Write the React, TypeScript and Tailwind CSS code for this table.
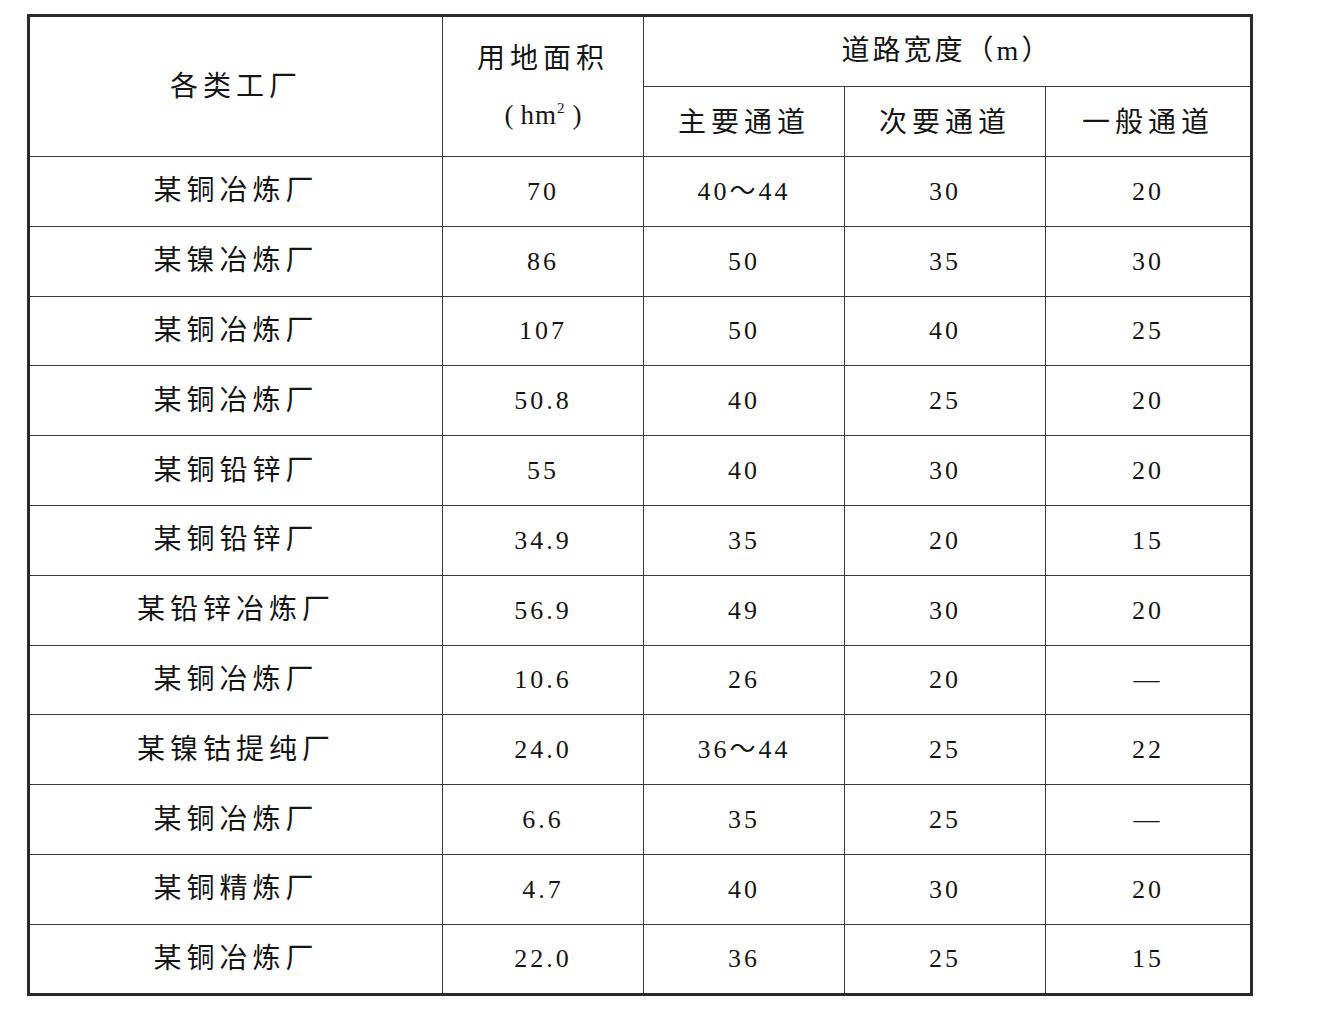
const rows: string[][] = [
  ["某铜冶炼厂", "70", "40～44", "30", "20"],
  ["某镍冶炼厂", "86", "50", "35", "30"],
  ["某铜冶炼厂", "107", "50", "40", "25"],
  ["某铜冶炼厂", "50.8", "40", "25", "20"],
  ["某铜铅锌厂", "55", "40", "30", "20"],
  ["某铜铅锌厂", "34.9", "35", "20", "15"],
  ["某铅锌冶炼厂", "56.9", "49", "30", "20"],
  ["某铜冶炼厂", "10.6", "26", "20", "—"],
  ["某镍钴提纯厂", "24.0", "36～44", "25", "22"],
  ["某铜冶炼厂", "6.6", "35", "25", "—"],
  ["某铜精炼厂", "4.7", "40", "30", "20"],
  ["某铜冶炼厂", "22.0", "36", "25", "15"],
];

const cell = "border border-[#3a3a3a] text-center align-middle p-0";
const han = "text-[28px] tracking-[5px]";

export default function App() {
  return (
    <div
      className="bg-white w-[1323px] h-[1016px] pt-[14px] pl-[27px] text-[#151515] text-[26px] tracking-[3px]"
      style={{ fontFamily: '"Liberation Serif", "Noto Sans CJK SC", serif' }}
    >
      <table className="border-collapse table-fixed w-[1223px] border-[3px] border-[#2a2a2a]">
        <colgroup>
          <col className="w-[414px]" />
          <col className="w-[201px]" />
          <col className="w-[201px]" />
          <col className="w-[201px]" />
          <col className="w-[206px]" />
        </colgroup>
        <thead>
          <tr className="h-[71px]">
            <td rowSpan={2} className={`${cell} ${han}`}>
              各类工厂
            </td>
            <td rowSpan={2} className={cell}>
              <div className="flex flex-col items-center gap-[16px]">
                <span className={`${han} leading-[40px]`}>用地面积</span>
                <span className="leading-[40px] text-[27px] tracking-normal flex items-baseline">
                  <span className="mr-[7px]">(</span>
                  <span className="tracking-[1px]">hm</span>
                  <sup className="text-[15px] relative -top-[11px]">2</sup>
                  <span className="ml-[8px]">)</span>
                </span>
              </div>
            </td>
            <td colSpan={3} className={`${cell} text-[28px] tracking-[3px] pb-[2px]`}>
              道路宽度（m）
            </td>
          </tr>
          <tr className="h-[70px]">
            <td className={`${cell} ${han} pt-[2px]`}>主要通道</td>
            <td className={`${cell} ${han} pt-[2px]`}>次要通道</td>
            <td className={`${cell} ${han} pt-[2px]`}>一般通道</td>
          </tr>
        </thead>
        <tbody>
          {rows.map((r, i) => (
            <tr key={i} className="h-[69.8px]">
              {r.map((v, j) => (
                <td key={j} className={j === 0 ? `${cell} ${han}` : cell}>
                  {v}
                </td>
              ))}
            </tr>
          ))}
        </tbody>
      </table>
    </div>
  );
}
